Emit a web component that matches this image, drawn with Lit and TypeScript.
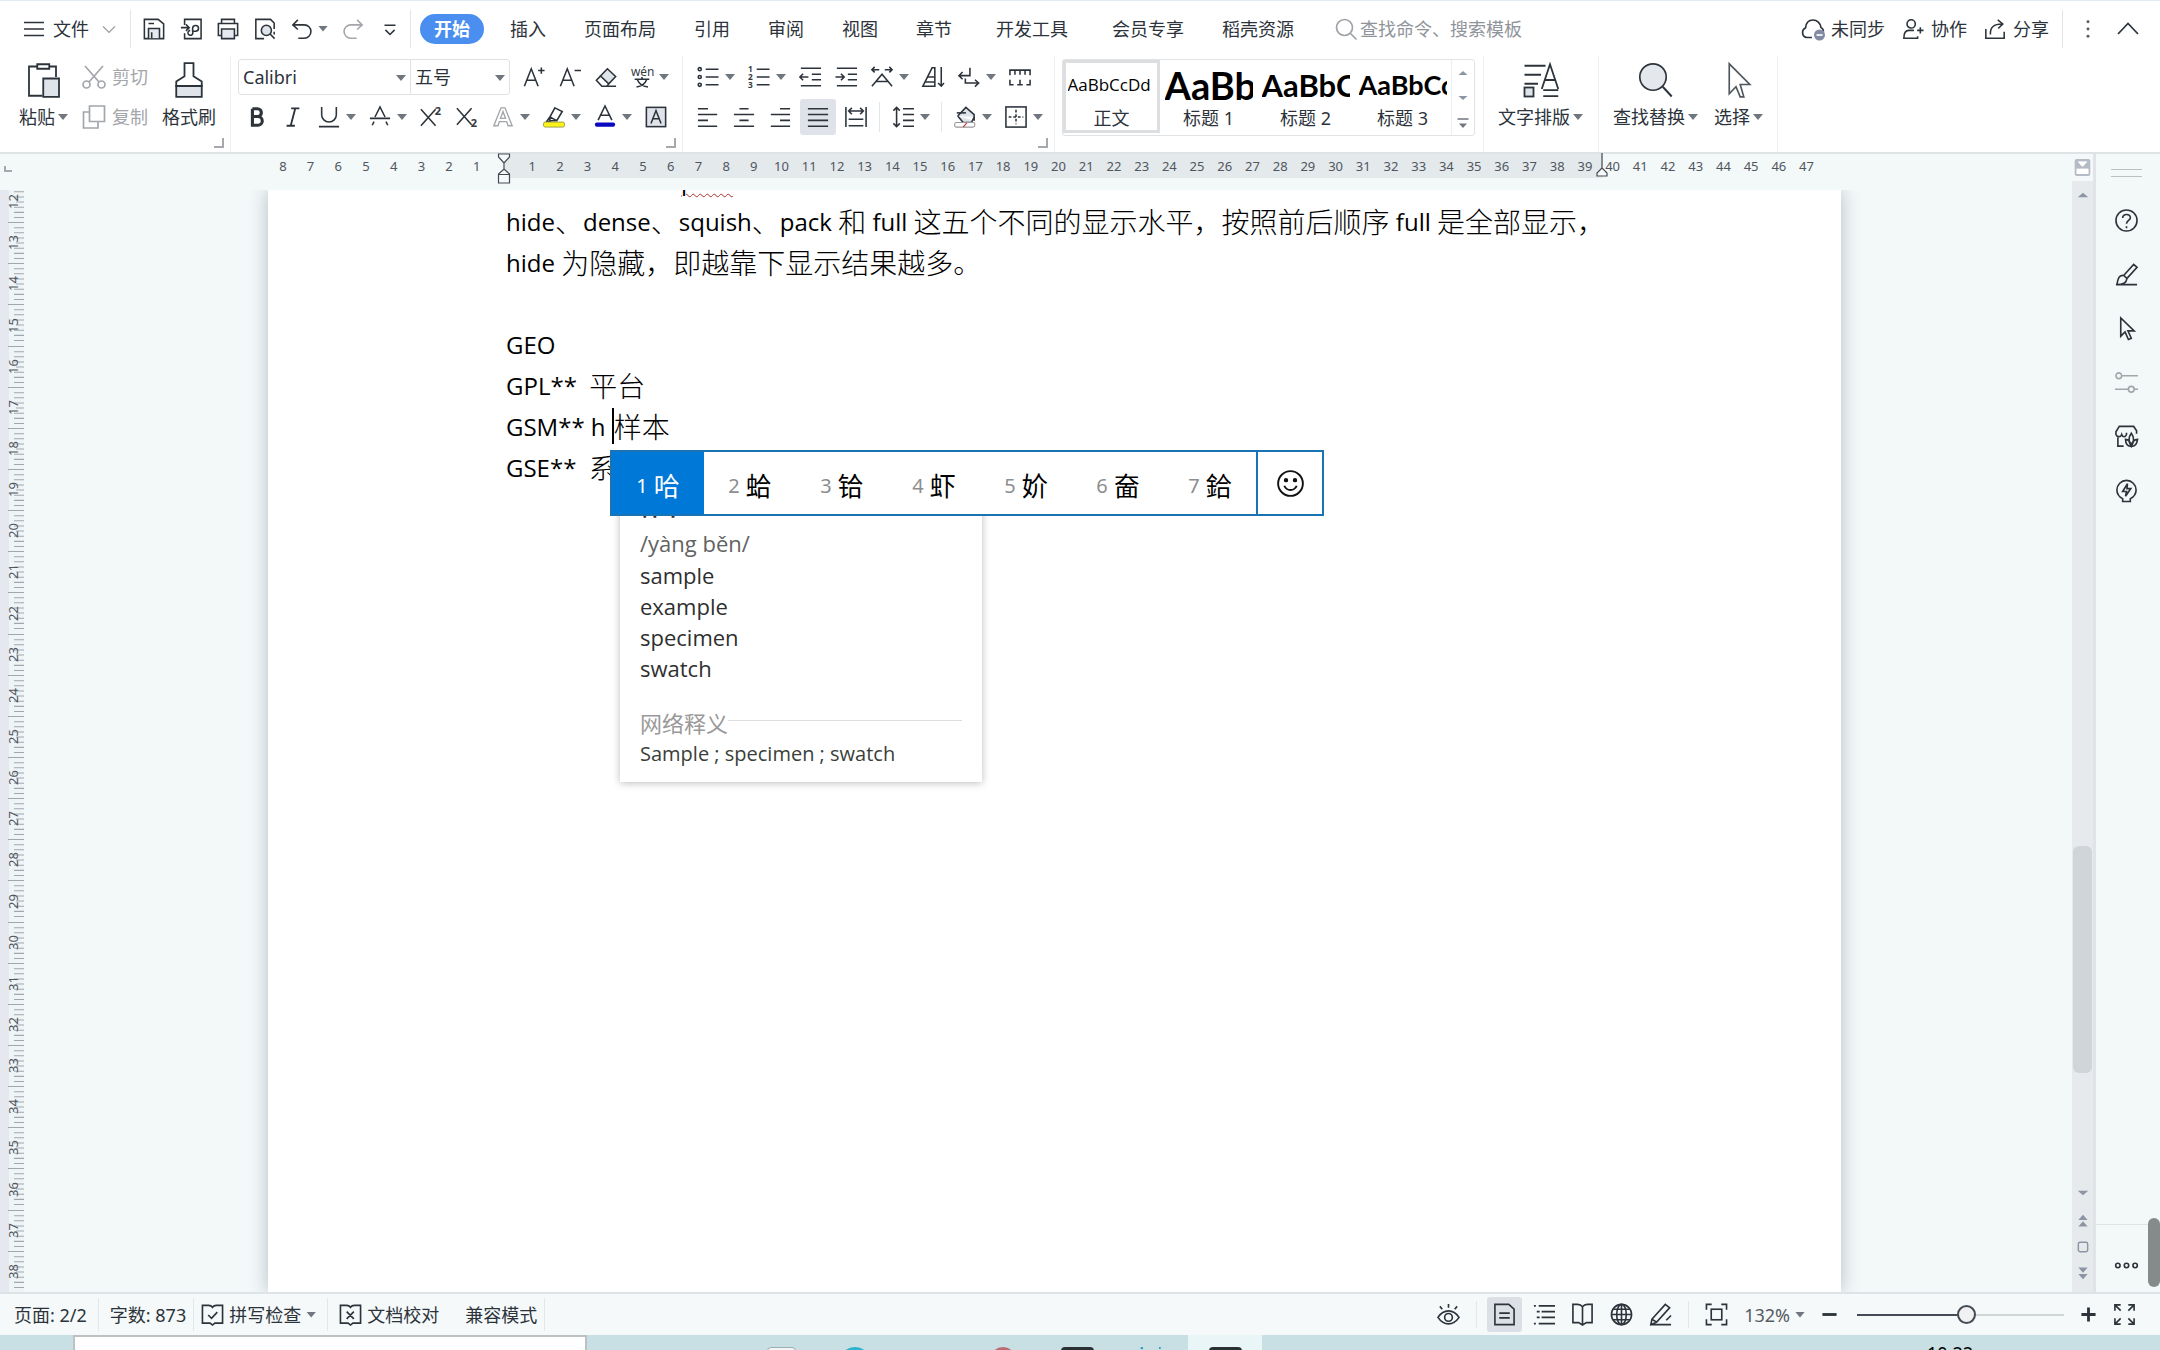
import { LitElement, html, svg, css, nothing } from "lit";
import { customElement, property } from "lit/decorators.js";
import { classMap } from "lit/directives/class-map.js";

const letter = (x: number, y: number, size: number, t: string) =>
  svg`<text x=${x} y=${y} font-size=${size} font-weight="bold" stroke="none" fill="#333a42" font-family="Noto Sans, sans-serif">${t}</text>`;

const ICONS: Record<string, unknown> = {
  menu: svg`<path d="M2 5.500h20M2 12h20M2 18.500h20"/>`,
  chevron: svg`<path d="M4 8.500l8 8 8-8"/>`,
  chevronUp: svg`<path d="M2 17l10-10.500L22 17"/>`,
  save: svg`<path d="M1.500 1.500h15l6 5v16h-21z"/><path d="M6 22V11.500h12V22" fill="#e6e9ef"/><path d="M6 6h6M9.500 15.500V22"/>`,
  exportPdf: svg`<path d="M5 7.500V1.500h18v21H5v-6M1 10.500h9M6.500 7l3.500 3.500-3.500 3.500"/><path d="M13.500 14.500h3.500a3.200 3.200 0 1 0-3.200-3.200V15a2.700 2.700 0 1 1-2.700-1.500"/>`,
  print: svg`<path d="M5 6V1.500h14V6M5 19H1.500V6h21v13H19"/><path d="M5 12h14v10.500H5z" fill="#e6e9ef"/>`,
  preview: svg`<path d="M11 22.500H2v-21h16l4 4V12M22 15v3"/><circle cx="13.500" cy="13.500" r="5.500" fill="#dfe4ea"/><path d="M17.500 17.500l5 5"/>`,
  undo: svg`<path d="M7.500 2L2 7.500l5.500 5M2 7.500h12.500a7 7 0 0 1 0 14.500H8"/>`,
  redo: svg`<path d="M16.500 2L22 7.500l-5.500 5M22 7.500H9.500a7 7 0 0 0 0 14.500H16"/>`,
  more: svg`<path d="M6 8h12M7 13l5 5 5-5"/>`,
  search: svg`<circle cx="10.500" cy="10.500" r="8"/><path d="M16.500 16.500l6 6"/>`,
  cloud: svg`<path d="M11 20.500H6a5 5 0 0 1-1.500-9.500C5 5.500 8 3 12 3s7.500 3 8 7.500c1.500.800 2.500 2 2.500 4"/><circle cx="18.500" cy="18" r="5.500" fill="#828ba3" stroke="none"/><path d="M15.500 18h6" stroke="#fff"/>`,
  collab: svg`<circle cx="10" cy="6.500" r="4.500"/><path d="M13 13.500H7.500C4 13.500 2 16 2 22h15v-2M16.500 13.500h7M20 10v7"/>`,
  share: svg`<path d="M2 12v10h20v-7M7 18c-.5-8 4-11.500 12.500-11.500M15 2l5.500 4.500-5 5"/>`,
  dots: svg`<g fill="#555c66" stroke="none"><circle cx="12" cy="4" r="1.600"/><circle cx="12" cy="12" r="1.600"/><circle cx="12" cy="20" r="1.600"/></g>`,
  paste: svg`<path d="M7.500 3H2v19.500h9M15.500 3H20v7M7.500 1.500h8v3h-8z" stroke-width="1.200"/><path d="M11.500 11H22v12.300H11.500z" fill="#dfe3ea" stroke-width="1.200"/>`,
  cut: svg`<path d="M3 1l14 16M21 1L7 17"/><circle cx="4.500" cy="19.500" r="3.500"/><circle cx="19.500" cy="19.500" r="3.500"/>`,
  copy: svg`<path d="M7.500 1h15v15.500h-15z"/><path d="M7 7H1.500v16H16v-6"/>`,
  brush: svg`<path d="M9 .800h6V9.500l5.500 3.500v3h-17v-3L9 9.500z" stroke-width="1.200"/><path d="M3.500 16h17v7.200h-17z" fill="#dfe3ea" stroke-width="1.200"/>`,
  fontUp: svg`<path d="M1.500 22L9 3l7.500 19M4.500 15.500h9M16.500 5h7M20 1.500v7"/>`,
  fontDown: svg`<path d="M1.500 22L9 3l7.500 19M4.500 15.500h9M17 5h7"/>`,
  eraser: svg`<path d="M13.500 3l9 8.500-7.500 8-9-8.500z" fill="#dfe3ea"/><path d="M6 11l-4.500 4.500 6 6.500H13l2-2.500M13 22h10"/>`,
  wen: svg`<text x="0" y="11" font-size="13" stroke="none" fill="#333a42" font-family="Noto Sans, sans-serif">wén</text><path d="M4 14.500h16M12 12v2.500M7 15c1.500 4 6 7 11.500 8M17 15c-1.500 4-5 7-11 8"/>`,
  bold: svg`<path d="M7 3v18h6a4.700 4.700 0 0 0 0-9.500H7M7 3h5.500a4.200 4.200 0 0 1 0 8.500" stroke-width="3.400"/>`,
  italic: svg`<path d="M10 2.500h9M5 21.500h9M14.500 2.500l-5 19" stroke-width="2"/>`,
  underline: svg`<path d="M4 1v8.500a8 8 0 0 0 16 0V1M1 22.500h22"/>`,
  strike: svg`<path d="M1 13.500h22M6.500 12L12 1l5.500 11M3.500 21l2-4M20.500 21l-2-4"/>`,
  sup: svg`<path d="M1 3.500l16 18M17 3.500l-16 18"/>${letter(16, 10, 12, "2")}`,
  sub: svg`<path d="M1 2.500l16 18M17 2.500l-16 18"/>${letter(16, 23, 12, "2")}`,
  outlineA: svg`<path d="M2 21.500L9.800 2h4.400L22 21.500h-4.500L16 17H8l-1.500 4.500zM9.300 13.500h5.400L12 6z" stroke-width="1.500"/>`,
  highlight: svg`<path d="M13 2l8 4-6 10H7.500v-4zM7.500 12l7.500 4M7.500 12L4 17h5"/><rect x=".5" y="17.500" width="23" height="5.500" rx="2" fill="#fbf21a" stroke="#9b9a45" stroke-width="1"/>`,
  colorA: svg`<path d="M4.500 15.500L12 0l7.500 15.500M7.500 10h9"/><rect x="1" y="18" width="22" height="4.500" rx="2" fill="#0a08c0" stroke="none"/>`,
  boxA: svg`<rect x="1.500" y="1.500" width="21" height="21" fill="#dfe3ea"/><path d="M6.500 19L12 5l5.500 14M8.500 14h7"/>`,
  bullets: svg`<circle cx="3" cy="3.500" r="1.700"/><circle cx="3" cy="12" r="1.700"/><circle cx="3" cy="20.500" r="1.700"/><path d="M9.500 3.500h14M9.500 12h14M9.500 20.500h14"/>`,
  numbers: svg`${letter(0, 7, 9, "1")}${letter(0, 15.5, 9, "2")}${letter(0, 24, 9, "3")}<path d="M9.500 3.500h14M9.500 12h14M9.500 20.500h14"/>`,
  outdent: svg`<path d="M2 2.500h22M14 9h10M14 15h10M2 21.500h22M.8 12h9.500M4.500 8.500L1 12l3.500 3.500"/>`,
  indent: svg`<path d="M2 2.500h22M14 9h10M14 15h10M2 21.500h22M.5 12h9.500M6.500 8.500L10 12l-3.500 3.500"/>`,
  scaleA: svg`<path d="M1 22l11-13 11 13M5.500 17h13M1 4h8M4 1L1 4l3 3M15 4h8M20 1l3 3-3 3"/>`,
  sort: svg`<path d="M1 22L11 2h3v20zM6 12h8M3 17.500h11M21 1v21M17.500 18.500L21 22l3-3.500"/>`,
  wrap: svg`<path d="M13 2v8.500H1M5 6.500l-4 4 4 4M8 13.500v5h14M18.500 15l4 3.500-4 4"/>`,
  tabs: svg`<path d="M1 10V4.500h22V10M6.500 4.500v5M12 4.500v5M17.500 4.500v5M1 15v5.500h4M23 15v5.500h-4M12 15v5.500M9 20.500h6"/>`,
  left: svg`<path d="M1 3h11M1 9.300h21M1 15.700h11M1 22h21"/>`,
  center: svg`<path d="M7 3h10M1 9.300h22M7 15.700h10M1 22h22"/>`,
  right: svg`<path d="M12 3h11M2 9.300h21M12 15.700h11M2 22h21"/>`,
  justify: svg`<path d="M1 3h22M1 9.300h22M1 15.700h22M1 22h22"/>`,
  spread: svg`<path d="M1 1v22M23 1v22M4 14.500h16M4 21.500h16M4 5.500h16M7.500 2L4 5.500 7.500 9M16.500 2L20 5.500 16.500 9"/>`,
  spacing: svg`<path d="M5 1.500v21M1.500 5L5 1.500 8.500 5M1.500 19L5 22.500 8.500 19M12 3h12M12 9.300h12M12 15.700h12M12 22h12"/>`,
  fill: svg`<path d="M4 11l9-9.500 9 8v6.500M4 11l6 7h9l3-6" fill="#dfe3ea"/><path d="M3 7.500h10"/><rect x=".7" y="18" width="22" height="5" rx="2" fill="#fff" stroke="#999" stroke-width="1.200"/><path d="M10 23l4-4.500" stroke="#c33" stroke-width="1.200"/>`,
  border: svg`<rect x="1" y="1" width="22" height="22"/><path d="M12 4v16M4 12h16" stroke-dasharray="3 2"/>`,
  typeset: svg`<path d="M1 2.500h14M1 8.500h11M1 14.500h9M12.500 18L18 1.500 23.500 18M14.500 12h7M13.500 18.800h10M13.500 22.800h10" stroke-width="1.200"/><rect x="1" y="17" width="6" height="6" fill="#dfe3ea" stroke-width="1.200"/>`,
  find: svg`<circle cx="10" cy="10" r="8.800" fill="#e4e7eb" stroke-width="1.100"/><path d="M16.500 16.500l6 6.500" stroke-width="1.300"/>`,
  pointer: svg`<path d="M6 1v19l4.500-4.500 3.500 8 3-1.300-3.500-7.700H20z"/>`,
  select: svg`<path d="M5.500 1.200v20l4.500-4.700 2.800 6.700h2.400l-2.400-8.200h6.400z" stroke-width="1.100" stroke="#4f565e"/>`,
  help: svg`<circle cx="12" cy="12" r="11"/><path d="M8 9.500c0-5 8-5 8-.5 0 3-4 3-4 6.500M12 18v2"/>`,
  paint: svg`<path d="M9 13L19.500 1.500l3.500 3L12.500 16M9 13c-5-1-6 4-7 9.500 7 0 10-2 10.500-6.500zM9 13l3.500 3M1 22.500h22"/>`,
  sliders: svg`<circle cx="4" cy="5" r="3"/><path d="M7 5h17M0 19h14M20 19h4"/><circle cx="17" cy="19" r="3"/>`,
  shop: svg`<path d="M3 11v11h6M22.500 9V6L19.500 1.500h-15L1 7v3c1 3 5 3 6 0 1 3 4 3 5 0V8"/><path d="M17 8.500c-3 4-3 9 0 14 3-5 3-10 0-14zM17 22c-4 1-6-3-6-7 3 0 5 2 6 7zM17 22c4 1 6-3 6.500-7-3 0-5.500 2-6.500 7z" fill="#f2f7f8"/>`,
  idea: svg`<path d="M8 20.500C4 18.500 2 15.500 2 11.500a10 10 0 0 1 20 0c0 4-2 7-6 9v3H8zM13 5l-5 8h4l-1 5 5.500-8h-4z"/>`,
  eye: svg`<path d="M1 15c6-9 16-9 22 0-6 9-16 9-22 0zM12 1v4M3 3.500l2.500 3M21 3.500l-2.500 3"/><circle cx="12" cy="15" r="4"/>`,
  page: svg`<path d="M2 1.500h14.500l5.500 5v16H2zM6.500 10.500h11M6.500 15.500h11"/>`,
  list: svg`<path d="M2 3h2M7 3h17M5 9h3M10 9h14M5 15h3M10 15h14M2 21.500h2M7 21.500h17"/>`,
  book: svg`<path d="M12 4c-1.500-2-3-2.500-5-2.500H2v19h6l4 2.500 4-2.500h6v-19h-5c-2 0-3.500.5-5 2.500v18"/>`,
  globe: svg`<circle cx="12" cy="12" r="10.500"/><ellipse cx="12" cy="12" rx="5" ry="10.500"/><path d="M12 1.500v21M1.500 12h21M3.500 6.500h17M3.500 17.500h17"/>`,
  pen: svg`<path d="M3 17L17 1.500l4.500 3.500L8 20l-6 2.500zM3 17l5 3M1 22.500h22M18 18l5-5"/>`,
  fit: svg`<path d="M1.500 7V1.500H7M17 1.500h5.500V7M22.500 17v5.500H17M7 22.500H1.500V17"/><rect x="6.500" y="6.500" width="11" height="11"/>`,
  expand: svg`<path d="M2 8V2h6M2 2l6 6M16 2h6v6M22 2l-6 6M22 16v6h-6M22 22l-6-6M8 22H2v-6M2 22l6-6"/>`,
  spell: svg`<path d="M1.500 2.500h6.500c2 0 3 .5 4 2 1-1.500 2-2 4-2h6.500v18.500h-8L12 23l-2.500-2H1.500zM7.500 12.500l3.500 3.500 6-6.500"/>`,
  proof: svg`<path d="M1.500 2.500h6.500c2 0 3 .5 4 2 1-1.500 2-2 4-2h6.500v18.500h-8L12 23l-2.500-2H1.500zM8 9l7.500 7.500M15.500 9L8 16.500"/>`,
  smile: svg`<circle cx="12" cy="12" r="11"/><path d="M6.500 14c2 5 9 5 11 0"/><circle cx="8" cy="9" r="1.100" fill="#111"/><circle cx="16" cy="9" r="1.100" fill="#111"/>`,
  minus: svg`<path d="M2 12h20" stroke-width="4"/>`,
  plus: svg`<path d="M2 12h20M12 2v20" stroke-width="4"/>`,
  ooo: svg`<circle cx="3" cy="12" r="2.300"/><circle cx="12" cy="12" r="2.300"/><circle cx="21" cy="12" r="2.300"/>`,
  ruler: svg`<rect x="1" y="0" width="22" height="24" rx="3" fill="#b4bbc4" stroke="none"/><path d="M6 4h12l-5 6h-2zM4 21v-7h16v7M9 21v-4M15 21v-4" fill="#fff" stroke="#fff" stroke-width="1"/>`,
  triUp: svg`<path d="M3 16L12 8l9 8z" fill="#8d94a3" stroke="none"/>`,
  triDown: svg`<path d="M3 8l9 8 9-8z" fill="#8d94a3" stroke="none"/>`,
  triMore: svg`<path d="M4 13l8 9 8-9z" fill="#70767e" stroke="none"/><path d="M1 4h22" stroke="#70767e" stroke-width="3"/>`,
  pageUp: svg`<path d="M4 12l8-9 8 9zM4 23l8-9 8 9z" fill="#8d94a3" stroke="none"/>`,
  pageDown: svg`<path d="M4 1l8 9 8-9zM4 12l8 9 8-9z" fill="#8d94a3" stroke="none"/>`,
  square: svg`<rect x="4" y="4" width="16" height="16" rx="3" stroke="#8d94a3" stroke-width="2.500"/>`,
};

@customElement("wps-icon")
class WpsIcon extends LitElement {
  @property() name = "";
  static styles = css`
    :host { display: inline-flex; width: 24px; height: 24px; flex: none; }
    .glyph { width: 100%; height: 100%; overflow: visible; fill: none; stroke: currentColor; stroke-width: 1.7; }
  `;
  render() {
    return html`<svg class="glyph" viewBox="0 0 24 24" aria-hidden="true">${ICONS[this.name]}</svg>`;
  }
}

const ic = (name: string, cls = "") => html`<wps-icon class=${cls} name=${name}></wps-icon>`;
const caret = html`<span class="caret"></span>`;
const tool = (name: string, label: string, drop = false, cls = "") =>
  html`<button class="tool ${cls}" aria-label=${label}>${ic(name, "i22")}${drop ? caret : nothing}</button>`;

const STYLES = [
  { sample: "AaBbCcDd", name: "正文", cls: "s0", on: true },
  { sample: "AaBb", name: "标题 1", cls: "s1", on: false },
  { sample: "AaBbC", name: "标题 2", cls: "s2", on: false },
  { sample: "AaBbCc", name: "标题 3", cls: "s3", on: false },
];
const CANDIDATES = ["哈", "蛤", "铪", "虾", "妎", "奤", "鉿"];
const RULER = [...Array.from({ length: 8 }, (_, i) => 8 - i), 0, ...Array.from({ length: 47 }, (_, i) => i + 1)];
const VRULER = Array.from({ length: 27 }, (_, i) => i + 12);

@customElement("app-root")
class AppRoot extends LitElement {
  static styles = css`
    :host {
      display: flex; flex-direction: column; height: 100vh; overflow: hidden;
      font: 18px/24px "Noto Sans", "Noto Sans CJK SC", sans-serif; color: #2c333b; background: #f3f8f9;
    }
    * { box-sizing: border-box; }
    button, select, input { font: inherit; color: inherit; background: none; border: 0; padding: 0; margin: 0; outline: 0; }
    button { display: inline-flex; align-items: center; justify-content: center; white-space: nowrap; }
    select { appearance: none; width: 100%; height: 100%; }
    .caret { flex: none; width: 10px; height: 6px; background: #70767e; clip-path: polygon(0 0, 100% 0, 50% 100%); }
    .top { background: #fff; border-top: 1px solid #e3ebf3; border-bottom: 2px solid #dfe3e5; }
    .sep { flex: none; width: 1px; background: #e3e6e9; align-self: stretch; }
    .muted { color: #a3a6aa; }

    .menubar { display: flex; align-items: center; height: 55px; padding: 0 20px 0 22px; }
    .menubar .sep { height: 38px; align-self: center; }
    .file { gap: 7px; margin-right: 12px; }
    .file .end { color: #999; margin-left: 4px; width: 18px; }
    .quick { display: flex; align-items: center; gap: 13px; margin: 0 8px 0 11px; }
    .quick .tool { gap: 4px; }
    .tabs { display: flex; gap: 14px; margin-left: 9px; }
    .tabs button { height: 30px; padding: 0 12px; }
    .tabs .on { background: #4a8ff0; color: #fff; font-weight: 700; border-radius: 15px; padding: 0 14px; }
    .tabs .wide { margin-left: 6px; }
    .search { display: flex; align-items: center; gap: 2px; margin-left: 28px; color: #9ea3a9; flex: 1; }
    .search input { flex: 1; min-width: 0; }
    .search input::placeholder { color: #8f949a; opacity: 1; }
    .account { display: flex; align-items: center; gap: 16px; }
    .account button { gap: 6px; }
    .account .sep { margin: 0 -3px; }

    .ribbon { display: flex; height: 96px; align-items: stretch; }
    .group { position: relative; display: flex; padding: 3px 8px 0 7px; border-right: 1px solid #eceff1; }
    .launch::after { content: ""; position: absolute; right: 6px; bottom: 4px; width: 8px; height: 8px; border: solid #a5a9ad; border-width: 0 2px 2px 0; }
    .big { flex-direction: column; justify-content: flex-start; gap: 7px; padding-top: 3px; }
    .big wps-icon { width: 36px; height: 36px; }
    .big .text { display: flex; align-items: center; gap: 3px; height: 24px; }
    .clip { gap: 14px; padding-left: 19px; padding-right: 14px; }
    .rows { display: flex; flex-direction: column; gap: 4px; }
    .row { display: flex; align-items: center; gap: 12px; height: 36px; }
    .small { gap: 6px; height: 36px; }
    .tool { gap: 5px; min-height: 24px; }
    .i22 { width: 24px; height: 22px; }
    .font { padding-right: 13px; }
    .font .row + .row { padding-left: 7px; }
    .combo { display: flex; width: 272px; height: 36px; border: 1px solid #dfe2e4; border-radius: 3px; }
    .field { position: relative; display: block; flex: 1; padding-left: 4px; }
    .field:first-child { flex: 0 0 172px; border-right: 1px solid #dfe2e4; }
    .field .caret { position: absolute; right: 4px; top: 15px; }
    .para { padding-left: 13px; padding-right: 11px; }
    .row .sep { height: 30px; align-self: center; margin: 0 -1px; }
    .pressed { background: #dfe2e8; width: 36px; height: 36px; margin: 0 -4px; border-radius: 3px; }
    .gallery { display: flex; height: 77px; border: 1px solid #e0e3e5; border-radius: 3px; }
    .style { flex-direction: column; width: 97px; height: 73px; padding: 0 2px; color: #000; overflow: hidden; justify-content: flex-start; border: 3px solid transparent; }
    .style.on { border-color: #dcdedf; }
    .sample { height: 44px; line-height: 44px; width: 88px; overflow: hidden; text-align: left; font-weight: 700; font-family: Lato, sans-serif; }
    .s0 { font-family: "Open Sans", sans-serif; font-size: 17px; font-weight: 400; }
    .s1 { font-size: 38px; }
    .s2 { font-size: 31px; }
    .s3 { font-size: 27px; }
    .style .name { color: #2c333b; }
    .spin { display: flex; flex-direction: column; justify-content: space-around; align-items: center; width: 23px; border-left: 1px solid #eceff1; }
    .spin wps-icon { width: 12px; height: 12px; }
    .typeset { padding: 3px 15px 0 14px; }
    .edit { gap: 16px; padding: 3px 14px 0; }

    .main { flex: 1; display: flex; min-height: 0; }
    .work { flex: 1; min-width: 0; display: flex; flex-direction: column; }
    .hruler { height: 36px; padding-left: 37px; position: relative; z-index: 2; display: flex; }
    .corner { position: absolute; left: 4px; top: 12px; width: 8px; height: 6px; border: solid #a5a9ad; border-width: 0 0 2px 2px; }
    .scale { display: flex; width: 1573px; height: 24px; margin: 0 auto; padding: 0 21px 0 1px; background: linear-gradient(90deg, transparent 237px, #e4e9ec 237px 1335px, transparent 1335px); }
    .num { flex: 1 1 0; min-width: 0; position: relative; font-size: 13px; line-height: 24px; color: #50565e; display: flex; justify-content: center; }
    .mark { position: absolute; top: -1px; fill: #f7fafb; stroke: #454b54; stroke-width: 1.2; overflow: visible; }
    .mark.right { left: -3px; }
    .canvas { flex: 1; display: flex; min-height: 0; overflow: hidden; }
    .vruler { width: 26px; overflow: hidden; background: linear-gradient(90deg, #e5e9ef 9px, #eff4f6 9px 24px, transparent 24px); display: flex; flex-direction: column; }
    .vscale { display: flex; flex-direction: column; flex: 1; margin-top: -9px; }
    .vnum { flex: 1 1 0; position: relative; display: flex; align-items: center; font-size: 13px; color: #50565e; }
    .vnum span { writing-mode: vertical-rl; transform: rotate(180deg); line-height: 14px; width: 14px; margin-left: 6px; text-align: center; }
    .ticks { position: absolute; left: 8px; top: 0; width: 16px; height: 100%; stroke: #a1a7ae; stroke-width: 1; }
    .desk { flex: 1; padding-left: 11px; display: flex; min-width: 0; }
    .page { position: relative; width: 1573px; margin: 0 auto; background: #fff; box-shadow: 0 0 18px #b4bec0; color: #000; }
    .doc { margin-top: -30px; padding-left: 238px; font: 24px/41px "Open Sans", "Noto Sans CJK SC", sans-serif; }
    .doc p { margin: 0; height: 41px; white-space: pre; display: flex; }
    .doc .cn { font-size: 28px; font-weight: 300; font-family: "Noto Sans CJK SC", sans-serif; }
    .misspelt { margin-left: 175px; text-decoration: underline wavy #b03030 1px; text-underline-offset: 3px; }
    .cursor { width: 2px; height: 36px; background: #000; margin: 2px 0 0; }

    .ime { position: absolute; left: 342px; top: 260px; display: flex; height: 66px; border: 2px solid #1a74b4; background: #fff; }
    .cand { width: 92px; gap: 6px; font: 26px/36px "Noto Sans CJK SC", sans-serif; color: #000; padding-top: 4px; }
    .cand small { font: 20px/36px "Noto Sans", sans-serif; color: #8e8e8e; padding-top: 2px; }
    .cand.on, .cand.on small { background: #0078d7; color: #fff; }
    .emoji { width: 66px; border-left: 2px solid #1a74b4; color: #111; }
    .emoji wps-icon { width: 27px; height: 27px; }
    .dict { position: absolute; left: 352px; top: 300px; width: 362px; padding: 0 20px 12px; background: #fff; box-shadow: 0 1px 8px #0004; font: 22px/31px "Open Sans", "Noto Sans CJK SC", sans-serif; color: #2f2f2f; }
    .dict h2 { font-size: 22px; line-height: 32px; margin: 0 0 6px; }
    .dict p { margin: 0; color: #626262; }
    .dict ul { list-style: none; margin: 1px 0 24px; padding: 0; }
    .dict h3 { display: flex; font-weight: 400; font-size: 22px; line-height: 30px; margin: 0; color: #999; }
    .dict h3::after { content: ""; flex: 1; height: 1px; margin-top: 12px; background: #ddd; }
    .dict .web { font-size: 20px; line-height: 32px; color: #3a3f3a; }

    .vbar { width: 24px; padding-bottom: 5px; background: #e6eaed; border-right: 3px solid #e0e4e9; display: flex; flex-direction: column; align-items: center; }
    .vbar wps-icon { width: 14px; height: 14px; }
    .vbar .head { background: #f5f8f9; width: 100%; height: 27px; }
    .vbar .head wps-icon { width: 17px; height: 17px; }
    .vbar .step { height: 27px; width: 100%; }
    .track { flex: 1; width: 100%; display: flex; flex-direction: column; }
    .track::before { content: ""; flex: 639; }
    .track::after { content: ""; flex: 106; }
    .thumb { flex: 227; margin: 0 1px; border-radius: 6px; background: #cfd5d9; }
    .side { width: 64px; position: relative; display: flex; flex-direction: column; align-items: center; background: #f3f8f9; }
    .side::before { content: ""; width: 31px; height: 6px; margin: 15px 4px 31px 0; border: solid #b9bfc2; border-width: 1px 0; }
    .side button { height: 24px; margin: 0 4px 30px 0; }
    .side wps-icon { width: 23px; height: 23px; }
    .side .foot { margin: auto 0 0; padding: 28px 4px 14px 0; height: 68px; width: 100%; border-top: 1px solid #dfe4e6; }
    .pill { position: absolute; right: 0; bottom: 5px; width: 12px; height: 69px; border-radius: 6px; background: #858a8b; }

    .status { display: flex; align-items: center; height: 43px; padding: 0 24px 0 14px; border-top: 2px solid #dde4e8; background: #f5f9fa; }
    .status .sep { margin: 4px 7px; background: #e2e7ea; }
    .status .sep.far { margin: 4px 11px; }
    .status button { gap: 5px; }
    .status .compat { margin-left: 26px; }
    .status wps-icon { width: 23px; height: 23px; }
    .views { margin-left: auto; display: flex; align-items: center; gap: 16px; }
    .views .sep { margin: 4px 0; }
    .views .on { background: #dcdfe6; width: 35px; height: 35px; margin: 0 -6px; border-radius: 3px; }
    .zoomtext { color: #555b63; }
    .status .zoom { width: 207px; height: 20px; margin-left: 3px; appearance: none; background: linear-gradient(#454b54, #454b54) 0 50% / 53% 2px no-repeat, linear-gradient(#cfd4d7, #cfd4d7) 0 50% / 100% 2px no-repeat; }
    .zoom::-webkit-slider-thumb { appearance: none; width: 19px; height: 19px; border-radius: 50%; background: #f1f0f3; border: 2px solid #454b54; }
    .status .sign { width: 17px; height: 17px; }

    .taskbar { height: 15px; overflow: hidden; background: #c8dfe3; display: flex; align-items: flex-start; padding-left: 73px; color: #000; }
    .query { width: 514px; height: 20px; background: #fff; border: 2px solid #bcc1c3; border-bottom: 0; }
    .apps { flex: 1; display: flex; align-items: flex-start; padding-left: 157px; }
    .app { flex: none; height: 24px; width: 74px; display: flex; justify-content: center; padding-top: 12px; }
    .app i { width: 33px; height: 24px; border-radius: 4px; background: #2b3034; }
    .app .sheet { background: #f1f5f6; border: 1px solid #9faeb1; width: 29px; }
    .app .cyan { background: #2fb2cd; border-radius: 50%; width: 32px; height: 32px; }
    .app .red { background: #bd6a72; border-radius: 50%; width: 26px; height: 26px; }
    .app .ears { background: none; border: dotted #2797bd; border-width: 0 4px; width: 24px; }
    .app.on { background: #e9f5f6; }
    .clock { width: 233px; padding-top: 6px; line-height: 24px; }
  `;

  render() {
    return html`
      <header class="top">
        <div class="menubar">
          <button class="file">${ic("menu")}文件${ic("chevron", "end")}</button>
          <span class="sep"></span>
          <div class="quick">
            ${tool("save", "保存")}${tool("exportPdf", "输出为PDF")}${tool("print", "打印")}${tool("preview", "打印预览")}
            ${tool("undo", "撤销", true)}${tool("redo", "恢复", false, "muted")}${tool("more", "自定义")}
          </div>
          <span class="sep"></span>
          <nav class="tabs">
            <button class="on">开始</button><button>插入</button><button>页面布局</button><button>引用</button>
            <button>审阅</button><button>视图</button><button>章节</button><button class="wide">开发工具</button>
            <button class="wide">会员专享</button><button>稻壳资源</button>
          </nav>
          <label class="search">${ic("search")}<input type="search" aria-label="搜索" placeholder="查找命令、搜索模板" /></label>
          <div class="account">
            <button>${ic("cloud")}未同步</button><button>${ic("collab", "i22")}协作</button><button>${ic("share", "i22")}分享</button>
            <span class="sep"></span>
            <button aria-label="更多">${ic("dots", "i22")}</button><button aria-label="收起功能区">${ic("chevronUp")}</button>
          </div>
        </div>
        <div class="ribbon">
          <div class="group clip launch">
            <button class="big">${ic("paste")}<span class="text">粘贴${caret}</span></button>
            <div class="rows">
              <button class="small muted">${ic("cut")}剪切</button>
              <button class="small muted">${ic("copy")}复制</button>
            </div>
            <button class="big">${ic("brush")}<span class="text">格式刷</span></button>
          </div>
          <div class="group font launch">
            <div class="rows">
              <div class="row">
                <div class="combo">
                  <label class="field"><select aria-label="字体"><option>Calibri</option></select>${caret}</label>
                  <label class="field"><select aria-label="字号"><option>五号</option></select>${caret}</label>
                </div>
                ${tool("fontUp", "增大字号")}${tool("fontDown", "减小字号")}${tool("eraser", "清除格式")}${tool("wen", "拼音指南", true)}
              </div>
              <div class="row">
                ${tool("bold", "加粗")}${tool("italic", "倾斜")}${tool("underline", "下划线", true)}${tool("strike", "删除线", true)}
                ${tool("sup", "上标")}${tool("sub", "下标")}${tool("outlineA", "文字效果", true, "muted")}${tool("highlight", "突出显示", true)}
                ${tool("colorA", "字体颜色", true)}${tool("boxA", "字符底纹")}
              </div>
            </div>
          </div>
          <div class="group para launch">
            <div class="rows">
              <div class="row">
                ${tool("bullets", "项目符号", true)}${tool("numbers", "编号", true)}${tool("outdent", "减少缩进")}${tool("indent", "增加缩进")}
                ${tool("scaleA", "中文版式", true)}${tool("sort", "排序")}${tool("wrap", "编辑标记", true)}${tool("tabs", "制表位")}
              </div>
              <div class="row">
                ${tool("left", "左对齐")}${tool("center", "居中")}${tool("right", "右对齐")}${tool("justify", "两端对齐", false, "pressed")}${tool("spread", "分散对齐")}
                <span class="sep"></span>${tool("spacing", "行距", true)}<span class="sep"></span>${tool("fill", "底纹", true)}${tool("border", "边框", true)}
              </div>
            </div>
          </div>
          <div class="group">
            <div class="gallery">
              ${STYLES.map((s) => html`<button class=${classMap({ style: true, on: s.on })}><span class="sample ${s.cls}">${s.sample}</span><span class="name">${s.name}</span></button>`)}
              <div class="spin">${ic("triUp")}${ic("triDown")}${ic("triMore")}</div>
            </div>
          </div>
          <div class="group typeset"><button class="big">${ic("typeset")}<span class="text">文字排版${caret}</span></button></div>
          <div class="group edit">
            <button class="big">${ic("find")}<span class="text">查找替换${caret}</span></button>
            <button class="big">${ic("select")}<span class="text">选择${caret}</span></button>
          </div>
        </div>
      </header>

      <main class="main">
        <section class="work">
          <div class="hruler">
            <span class="corner"></span>
            <div class="scale">
              ${RULER.map((n) => html`<span class="num">${n || nothing}${n === 0
                ? html`<svg class="mark" width="12" height="32"><path d="M.5 1h11v3L6 10 .5 4zM6 10v6M6 16l5.500 5v9H.500v-9zM.5 21.500h11" /></svg>`
                : nothing}${n === 40
                ? html`<svg class="mark right" width="12" height="24"><path d="M6 0v15l5 5v3H1v-3l5-5" /></svg>` : nothing}</span>`)}
            </div>
          </div>
          <div class="canvas">
            <div class="vruler"><div class="vscale">
              ${VRULER.map((n) => html`<div class="vnum"><svg class="ticks" viewBox="0 0 16 40" preserveAspectRatio="none"><path d="M0 .5h16M6 5.500h10M6 10.500h10M6 15.500h10M8 20.500h8M6 25.500h10M6 30.500h10M6 35.500h10" /></svg><span>${n}</span></div>`)}
            </div></div>
            <div class="desk">
              <div class="page">
                <article class="doc">
                  <p><span class="misspelt">pack</span></p>
                  <p>hide<span class="cn">、</span>dense<span class="cn">、</span>squish<span class="cn">、</span>pack <span class="cn">和</span> full <span class="cn">这五个不同的显示水平，按照前后顺序</span> full <span class="cn">是全部显示，</span></p>
                  <p>hide <span class="cn">为隐藏，即越靠下显示结果越多。</span></p>
                  <p></p>
                  <p>GEO</p>
                  <p>GPL**  <span class="cn">平台</span></p>
                  <p>GSM** h <span class="cursor"></span><span class="cn">样本</span></p>
                  <p>GSE**  <span class="cn">系列</span></p>
                </article>
                <aside class="dict">
                  <h2>样本</h2>
                  <p>/yàng běn/</p>
                  <ul><li>sample</li><li>example</li><li>specimen</li><li>swatch</li></ul>
                  <h3>网络释义</h3>
                  <p class="web">Sample ; specimen ; swatch</p>
                </aside>
                <div class="ime">
                  ${CANDIDATES.map((c, i) => html`<button class=${classMap({ cand: true, on: i === 0 })}><small>${i + 1}</small>${c}</button>`)}
                  <button class="emoji" aria-label="表情">${ic("smile")}</button>
                </div>
              </div>
            </div>
          </div>
        </section>
        <div class="vbar">
          <button class="head" aria-label="标尺">${ic("ruler")}</button>
          <button class="step" aria-label="向上">${ic("triUp")}</button>
          <div class="track"><div class="thumb"></div></div>
          <button class="step" aria-label="向下">${ic("triDown")}</button>
          <button class="step" aria-label="上一页">${ic("pageUp")}</button>
          <button class="step" aria-label="选择浏览对象">${ic("square")}</button>
          <button class="step" aria-label="下一页">${ic("pageDown")}</button>
        </div>
        <aside class="side">
          <button aria-label="帮助">${ic("help")}</button><button aria-label="样式">${ic("paint")}</button>
          <button aria-label="选择">${ic("pointer")}</button><button class="muted" aria-label="属性">${ic("sliders")}</button>
          <button aria-label="稻壳">${ic("shop")}</button><button aria-label="推荐">${ic("idea")}</button>
          <button class="foot" aria-label="更多">${ic("ooo")}</button>
          <span class="pill"></span>
        </aside>
      </main>

      <footer class="status">
        <span>页面: 2/2</span><span class="sep far"></span>
        <span>字数: 873</span><span class="sep"></span>
        <button>${ic("spell")}拼写检查${caret}</button><span class="sep far"></span>
        <button>${ic("proof")}文档校对</button><button class="compat">兼容模式</button><span class="sep"></span>
        <div class="views">
          <button aria-label="护眼模式">${ic("eye")}</button><span class="sep"></span>
          <button class="on" aria-label="页面视图">${ic("page")}</button><button aria-label="大纲">${ic("list")}</button>
          <button aria-label="阅读版式">${ic("book")}</button><button aria-label="Web版式">${ic("globe")}</button>
          <button aria-label="写作模式">${ic("pen")}</button><span class="sep"></span>
          <button aria-label="最佳显示比例">${ic("fit")}</button>
          <button class="zoomtext">132%${caret}</button>
          <button aria-label="缩小">${ic("minus", "sign")}</button>
          <input class="zoom" type="range" aria-label="显示比例" min="0" max="100" value="53" />
          <button aria-label="放大">${ic("plus", "sign")}</button>
          <button aria-label="全屏">${ic("expand")}</button>
        </div>
      </footer>
      <div class="taskbar">
        <div class="query"></div>
        <div class="apps">
          <span class="app"><i class="sheet"></i></span><span class="app"><i class="cyan"></i></span><span class="app"></span>
          <span class="app"><i class="red"></i></span><span class="app"><i></i></span><span class="app"><i class="ears"></i></span>
          <span class="app on"><i></i></span>
        </div>
        <time class="clock">10:22</time>
      </div>
    `;
  }
}
